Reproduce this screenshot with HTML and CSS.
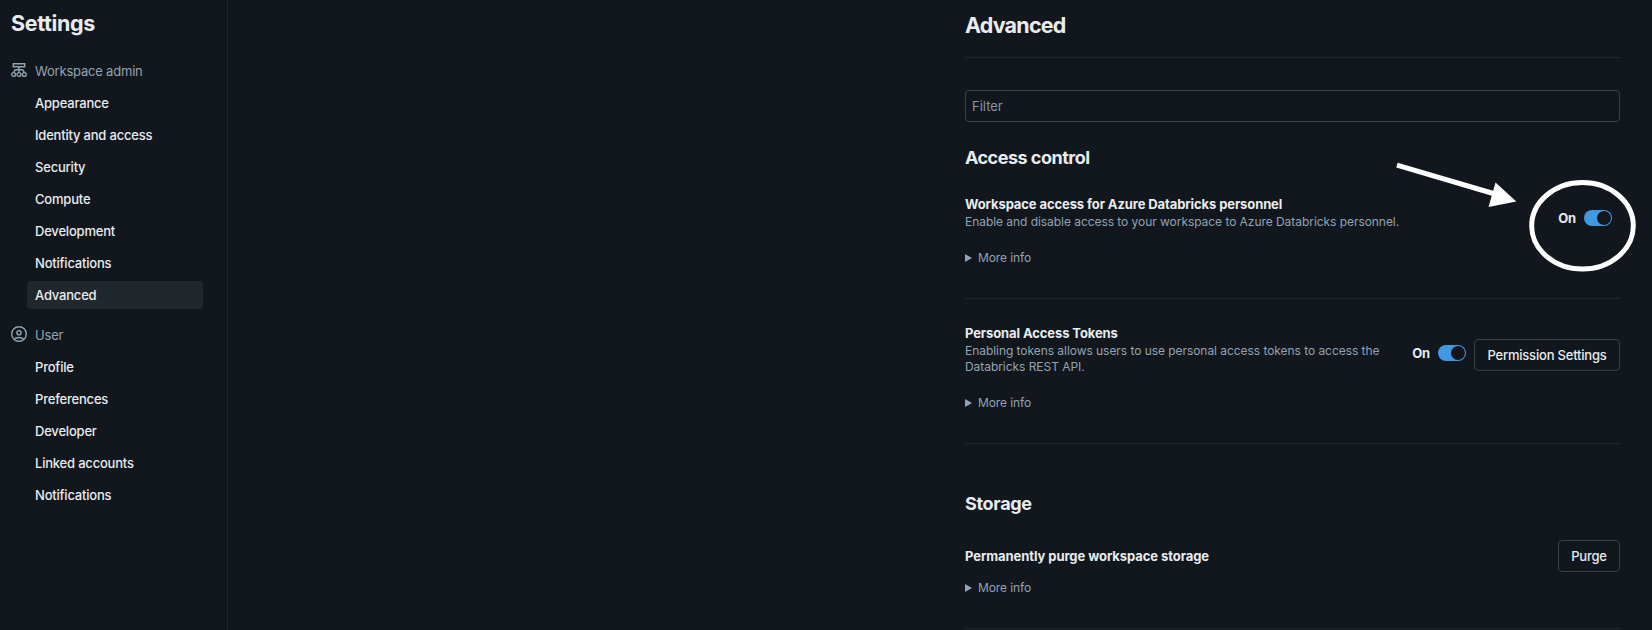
FILE: index.html
```html
<!DOCTYPE html>
<html lang="en">
<head>
<meta charset="utf-8">
<title>Settings</title>
<link rel="stylesheet" href="styles.css">
</head>
<body>
<div class="app">
  <aside class="sidebar">
    <h1 class="sidebar-title">Settings</h1>
    <nav class="group">
      <div class="group-head">
        <svg class="icon" viewBox="0 0 16 16" fill="none" stroke="currentColor" stroke-width="1.4">
          <path d="M2.300 1.700H13.700V4.700H2.300ZM8 4.700V10.500M3 10.700C3 8.600 4 7.700 5.500 7.700H10.500C12 7.700 13 8.600 13 10.700"/>
          <circle cx="2.700" cy="12.500" r="1.900"/><circle cx="8" cy="12.500" r="1.900"/><circle cx="13.300" cy="12.500" r="1.900"/>
        </svg>
        <span>Workspace admin</span>
      </div>
      <a class="item">Appearance</a>
      <a class="item">Identity and access</a>
      <a class="item">Security</a>
      <a class="item">Compute</a>
      <a class="item">Development</a>
      <a class="item">Notifications</a>
      <a class="item selected">Advanced</a>
    </nav>
    <nav class="group">
      <div class="group-head">
        <svg class="icon" viewBox="0 0 16 16" fill="none" stroke="currentColor" stroke-width="1.4">
          <circle cx="8" cy="8" r="7.300"/><circle cx="8" cy="6.800" r="2.100"/><path d="M3.200 13.200c2.600-2.300 7-2.300 9.600 0"/>
        </svg>
        <span>User</span>
      </div>
      <a class="item">Profile</a>
      <a class="item">Preferences</a>
      <a class="item">Developer</a>
      <a class="item">Linked accounts</a>
      <a class="item">Notifications</a>
    </nav>
  </aside>
  <main class="content">
    <h2 class="page-title">Advanced</h2>
    <input class="filter" type="text" placeholder="Filter">
    <h3 class="section-title">Access control</h3>
    <section class="setting access">
      <div class="info">
        <div class="name">Workspace access for Azure Databricks personnel</div>
        <div class="desc">Enable and disable access to your workspace to Azure Databricks personnel.</div>
        <div class="more"><i class="caret"></i>More info</div>
      </div>
      <div class="controls"><b class="state">On</b><span class="toggle"></span></div>
    </section>
    <section class="setting tokens">
      <div class="info">
        <div class="name">Personal Access Tokens</div>
        <div class="desc">Enabling tokens allows users to use personal access tokens to access the<br>Databricks REST API.</div>
        <div class="more"><i class="caret"></i>More info</div>
      </div>
      <div class="controls"><b class="state">On</b><span class="toggle"></span></div>
      <button class="button permission">Permission Settings</button>
    </section>
    <h3 class="section-title storage-title">Storage</h3>
    <section class="setting storage">
      <div class="info">
        <div class="name">Permanently purge workspace storage</div>
        <div class="more"><i class="caret"></i>More info</div>
      </div>
      <button class="button purge">Purge</button>
    </section>
  </main>
  <svg class="annotation" viewBox="0 0 252 112" fill="none">
    <path d="M-3 5.200 95 34" stroke="#fff" stroke-width="5"/>
    <path d="M116.300 41.500 95.500 22.500 88.500 47Z" fill="#fff"/>
    <ellipse cx="182.500" cy="65.800" rx="50.800" ry="43.200" stroke="#fff" stroke-width="5"/>
  </svg>
</div>
</body>
</html>
```
FILE: styles.css
```css
* { box-sizing: border-box; }
body {
  margin: 0;
  height: 630px;
  overflow: hidden;
  background: #11171d;
  color: #e8ecf0;
  font-family: Inter, "Liberation Sans", sans-serif;
  font-size: 13px;
  line-height: 20px;
}
h1, h2, h3 { margin: 0; font-weight: 650; }
.app { position: relative; display: flex; height: 630px; }
.sidebar {
  width: 228px;
  border-right: 1px solid #20272e;
  padding: 9px 24px 0 11px;
}
.sidebar-title { font-size: 21.5px; line-height: 28px; letter-spacing: -0.35px; margin-bottom: 20px; }
.group { display: flex; flex-direction: column; gap: 4px; margin-bottom: 12px; letter-spacing: -0.2px; }
.group-head { display: flex; gap: 8px; height: 28px; line-height: 29px; color: #92a4b3; }
.icon { width: 16px; height: 16px; margin-top: 5px; }
.item {
  height: 28px;
  line-height: 29px;
  margin-left: 16px;
  padding-left: 8px;
  border-radius: 4px;
  font-weight: 500;
}
.selected { background: #20272d; }
.content { width: 655px; margin-left: auto; margin-right: 32px; }
.page-title {
  height: 58px;
  padding-top: 11px;
  border-bottom: 1px solid #20272e;
  font-size: 21.5px;
  line-height: 28px;
  letter-spacing: -0.8px;
}
.filter {
  display: block;
  width: 100%;
  height: 32px;
  margin-top: 32px;
  padding: 0 6px;
  border: 1px solid #37444f;
  border-radius: 4px;
  background: transparent;
  color: inherit;
  font: inherit;
}
.filter::placeholder { color: #8396a5; opacity: 1; }
.section-title { margin-top: 24px; font-size: 18px; line-height: 24px; letter-spacing: -0.5px; }
.storage-title { margin-top: 48px; letter-spacing: -0.3px; }
.setting { display: flex; border-bottom: 1px solid #20272e; }
.access { height: 129px; padding-top: 24px; }
.tokens { height: 145px; padding-top: 24px; }
.info { flex: 1; }
.name { font-weight: 700; line-height: 20px; letter-spacing: -0.1px; }
.desc { color: #92a4b3; font-size: 12px; line-height: 16px; letter-spacing: -0.05px; white-space: nowrap; }
.more { display: flex; align-items: center; gap: 6px; margin-top: 18px; color: #92a4b3; font-size: 12px; line-height: 20px; letter-spacing: -0.1px; }
.caret { border-left: 7px solid #92a4b3; border-top: 4px solid transparent; border-bottom: 4px solid transparent; }
.controls { display: flex; gap: 8px; height: 16px; line-height: 17px; }
.access .controls { margin: 16px 8px 0 0; }
.tokens .controls { margin: 22px 8px 0 0; }
.toggle { width: 28px; height: 16px; border-radius: 8px; background: #4299e0; display: flex; justify-content: flex-end; padding: 1px; }
.toggle::after { content: ""; width: 14px; height: 14px; border-radius: 7px; background: #11171d; }
.state { font-weight: 700; letter-spacing: -0.2px; }
.button {
  height: 32px;
  padding: 0;
  border: 1px solid #37444f;
  border-radius: 4px;
  background: transparent;
  box-shadow: 0 1px 0 #0b0f13;
  color: inherit;
  font: inherit;
  font-weight: 500;
  letter-spacing: -0.2px;
}
.permission { width: 146px; margin-top: 16px; }
.storage { height: 113px; padding-top: 24px; }
.storage .name { line-height: 33px; letter-spacing: -0.07px; }
.storage .more { margin-top: 5px; }
.purge { width: 62px; }
.annotation { position: absolute; left: 1400px; top: 160px; width: 252px; height: 112px; overflow: visible; pointer-events: none; }
```
